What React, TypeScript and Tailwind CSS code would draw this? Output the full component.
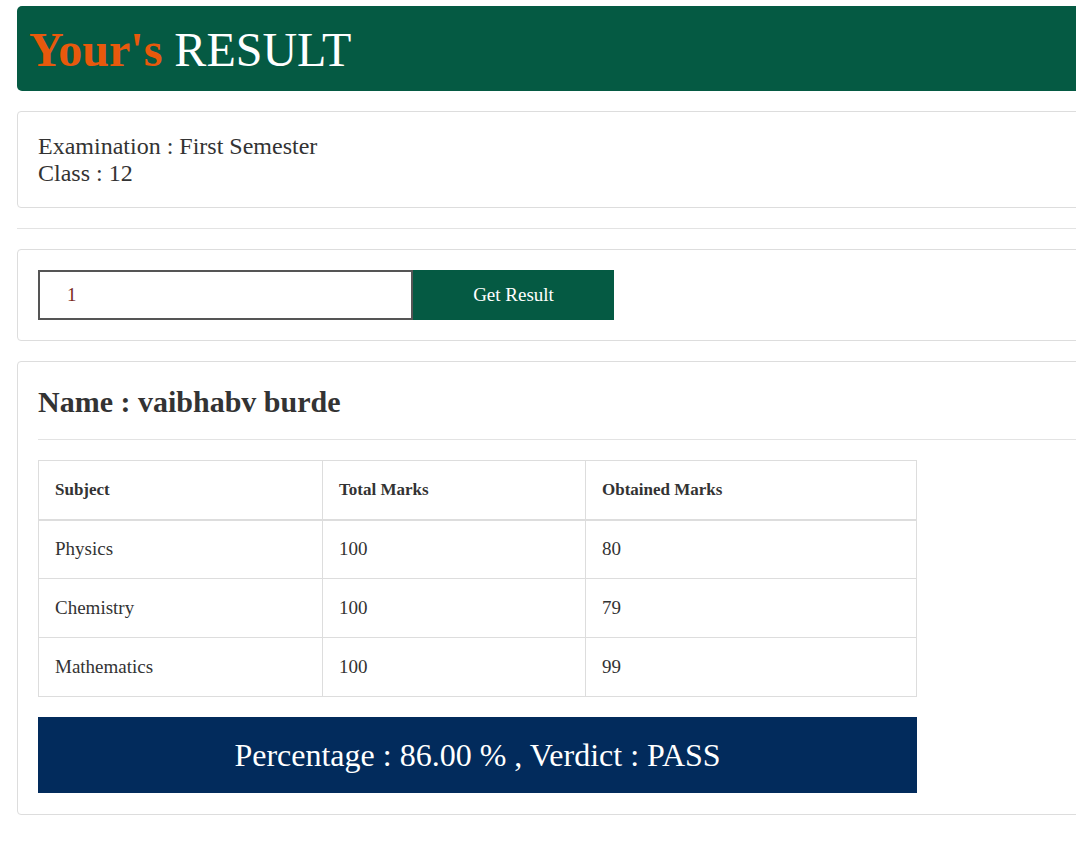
import React from "react";

const serif = { fontFamily: '"Liberation Serif", "DejaVu Serif", serif' };

export default function App() {
  const rows = [
    ["Physics", "100", "80"],
    ["Chemistry", "100", "79"],
    ["Mathematics", "100", "99"],
  ];
  return (
    <div className="w-full overflow-hidden bg-white text-[#333]" style={serif}>
      <div className="ml-[17px] w-[1100px] pt-[6px] pb-[28px]">
        <div className="h-[85px] bg-[#055a43] rounded-l-[5px] flex items-center pl-[12px]">
          <h1 className="text-[48px] leading-none mt-[2px]">
            <span className="text-[#e8590c] font-bold">Your's</span>{" "}
            <span className="text-white">RESULT</span>
          </h1>
        </div>

        <div className="mt-[20px] border border-[#ddd] rounded-l-[4px] px-[20px] pt-[21px] pb-[20px] text-[24px] leading-[27px]">
          <div>Examination : First Semester</div>
          <div>Class : 12</div>
        </div>

        <div className="mt-[20px] border-t border-[#e3e3e3]" />

        <div className="mt-[20px] border border-[#ddd] rounded-l-[4px] px-[20px] py-[20px] flex">
          <div className="w-[375px] h-[50px] border-2 border-[#555] flex items-center pl-[27px] text-[19px] text-[#7a2a1a]">
            1
          </div>
          <button className="w-[201px] h-[50px] bg-[#055a43] text-white text-[19px]">
            Get Result
          </button>
        </div>

        <div className="mt-[20px] border border-[#ddd] rounded-l-[4px] px-[20px] pt-[20px] pb-[21px]">
          <h2 className="text-[30px] font-bold leading-[40px]">Name : vaibhabv burde</h2>
          <div className="mt-[17px] border-t border-[#e3e3e3]" />
          <table className="mt-[20px] w-[879px] border-collapse text-[19px]">
            <thead>
              <tr className="h-[59px]">
                <th className="w-[284px] border border-[#ddd] border-b-2 text-left font-bold text-[17px] px-[16px]">Subject</th>
                <th className="w-[263px] border border-[#ddd] border-b-2 text-left font-bold text-[17px] px-[16px]">Total Marks</th>
                <th className="border border-[#ddd] border-b-2 text-left font-bold text-[17px] px-[16px]">Obtained Marks</th>
              </tr>
            </thead>
            <tbody>
              {rows.map((r) => (
                <tr key={r[0]} className="h-[59px]">
                  {r.map((c, i) => (
                    <td key={i} className="border border-[#ddd] px-[16px]">
                      {c}
                    </td>
                  ))}
                </tr>
              ))}
            </tbody>
          </table>
          <div className="mt-[20px] w-[879px] h-[76px] bg-[#022b5c] text-white text-[32px] flex items-center justify-center">
            Percentage : 86.00 % , Verdict : PASS
          </div>
        </div>
      </div>
    </div>
  );
}
